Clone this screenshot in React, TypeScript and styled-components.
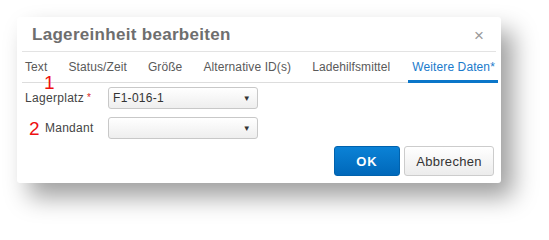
import { type FC } from "react";
import styled, { createGlobalStyle } from "styled-components";

const GlobalStyle = createGlobalStyle`
  html, body {
    margin: 0;
    padding: 0;
    background: #ffffff;
    font-family: "Liberation Sans", Arial, sans-serif;
  }
`;

const tabs = [
  "Text",
  "Status/Zeit",
  "Größe",
  "Alternative ID(s)",
  "Ladehilfsmittel",
  "Weitere Daten*",
];

const Page = styled.div`
  width: 549px;
  height: 232px;
  padding: 17px 0 0 17px;
  box-sizing: border-box;
`;

const Dialog = styled.div`
  position: relative;
  width: 484px;
  height: 166px;
  box-sizing: border-box;
  padding: 0 5px;
  background: #fff;
  border-radius: 3px;
  box-shadow: 12px 14px 24px rgba(0, 0, 0, 0.38);
  display: flex;
  flex-direction: column;
`;

const Header = styled.div`
  height: 35px;
  box-sizing: border-box;
  display: flex;
  align-items: center;
  justify-content: space-between;
  padding: 2px 12px 0 10px;
  border-bottom: 1px solid #e3e3e3;
`;

const Title = styled.h1`
  margin: 0;
  font-size: 17px;
  font-weight: bold;
  color: #6e6e6e;
  letter-spacing: 0.3px;
`;

const Close = styled.span`
  font-size: 17px;
  color: #9a9a9a;
  line-height: 1;
`;

const TabBar = styled.div`
  height: 30px;
  display: flex;
  gap: 15px;
  border-bottom: 1px solid #dddddd;
`;

const Tab = styled.div<{ $active?: boolean }>`
  padding: 2px 3px 0 ${(p) => (p.$active ? "4px" : "3px")};
  display: flex;
  align-items: center;
  font-size: 12px;
  letter-spacing: 0.1px;
  color: ${(p) => (p.$active ? "#1a7bcc" : "#5a5a5a")};
  border-bottom: 3px solid ${(p) => (p.$active ? "#0b76c9" : "transparent")};
  margin-bottom: -1px;
  white-space: nowrap;
`;

const Form = styled.div`
  position: relative;
  padding-top: 4px;
  display: flex;
  flex-direction: column;
  gap: 8px;
`;

const Row = styled.div`
  display: flex;
  align-items: center;
  height: 22px;
`;

const Label = styled.label`
  width: 86px;
  padding-left: 3px;
  box-sizing: border-box;
  display: flex;
  align-items: center;
  font-size: 12px;
  letter-spacing: 0.3px;
  color: #444;
`;

const Required = styled.span`
  color: #d9251d;
  font-size: 10px;
  margin-left: 3px;
  align-self: flex-start;
  margin-top: 1px;
`;

const Marker = styled.span`
  color: #ee1111;
  font-size: 19px;
  line-height: 1;
  margin: 0 5px 0 4px;
`;

const FloatingMarker = styled(Marker)`
  position: absolute;
  left: 22px;
  top: -7px;
  margin: 0;
  line-height: 14px;
`;

const Select = styled.div`
  width: 150px;
  height: 22px;
  box-sizing: border-box;
  border: 1px solid #c8c8c8;
  border-radius: 3px;
  background: linear-gradient(to bottom, #ffffff, #eeeeee);
  display: flex;
  align-items: center;
  justify-content: space-between;
  padding: 0 6px 0 4px;
  font-size: 12px;
  letter-spacing: 0.3px;
  color: #333;
`;

const Caret = styled.span`
  font-size: 8px;
  color: #333;
`;

const Footer = styled.div`
  display: flex;
  justify-content: flex-end;
  gap: 4px;
  margin-top: 7px;
  padding-right: 2px;
`;

const Button = styled.button<{ $primary?: boolean }>`
  height: 30px;
  box-sizing: border-box;
  border-radius: 3px;
  font-family: inherit;
  font-size: 13px;
  cursor: pointer;
  width: ${(p) => (p.$primary ? "66px" : "90px")};
  font-weight: ${(p) => (p.$primary ? "bold" : "normal")};
  color: ${(p) => (p.$primary ? "#ffffff" : "#333333")};
  border: 1px solid ${(p) => (p.$primary ? "#0062ad" : "#cccccc")};
  background: ${(p) =>
    p.$primary
      ? "linear-gradient(to bottom, #0b82d6, #0068ba)"
      : "linear-gradient(to bottom, #ffffff, #ececec)"};
  letter-spacing: ${(p) => (p.$primary ? "1px" : "0.3px")};
`;

const App: FC = () => (
  <Page>
    <GlobalStyle />
    <Dialog>
      <Header>
        <Title>Lagereinheit bearbeiten</Title>
        <Close>×</Close>
      </Header>
      <TabBar>
        {tabs.map((t, i) => (
          <Tab key={t} $active={i === tabs.length - 1}>
            {t}
          </Tab>
        ))}
      </TabBar>
      <Form>
        <FloatingMarker>1</FloatingMarker>
        <Row>
          <Label>
            Lagerplatz<Required>*</Required>
          </Label>
          <Select>
            F1-016-1<Caret>▼</Caret>
          </Select>
        </Row>
        <Row>
          <Label>
            <Marker>2</Marker>Mandant
          </Label>
          <Select>
            <span />
            <Caret>▼</Caret>
          </Select>
        </Row>
      </Form>
      <Footer>
        <Button $primary>OK</Button>
        <Button>Abbrechen</Button>
      </Footer>
    </Dialog>
  </Page>
);

export default App;
